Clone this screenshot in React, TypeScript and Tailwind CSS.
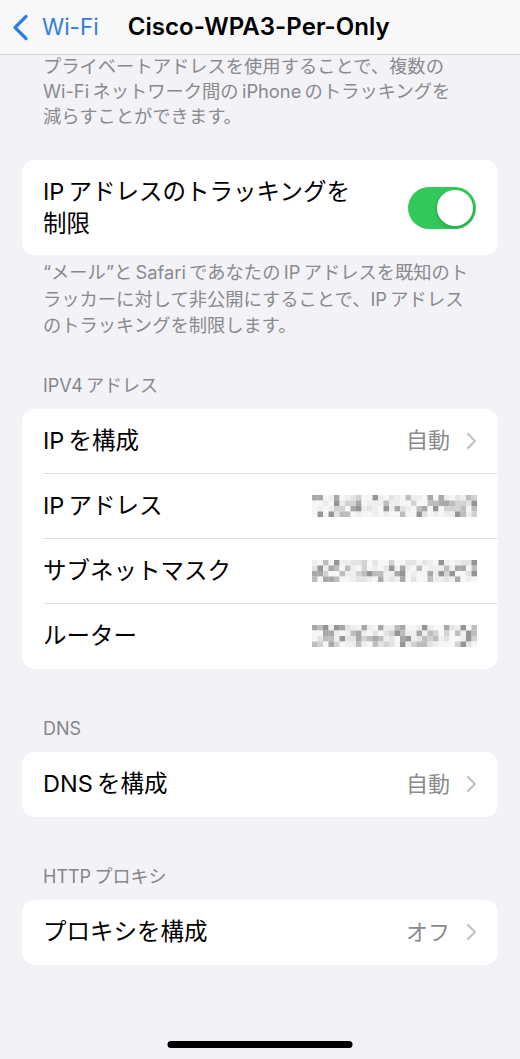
import React from 'react'

const font = { fontFamily: 'Inter, "Noto Sans CJK JP", sans-serif' }
const t = '\u2009' // thin gap iOS puts between latin and kana

// pixelated value, as in the screenshot (blurred IP)
function Mosaic({ seed }: { seed: number }) {
  const cols = 30
  const rows = 4
  const cell = 5.5
  const shades = ['#f6f6f6', '#eeeeee', '#e3e3e3', '#d2d2d2', '#bdbdbd', '#a8a8a8', '#959595']
  let s = seed
  const rand = () => {
    s = (s * 9301 + 49297) % 233280
    return s / 233280
  }
  const rects = []
  for (let r = 0; r < rows; r++) {
    for (let c = 0; c < cols; c++) {
      const v = rand()
      const idx = v < 0.28 ? 0 : v < 0.46 ? 1 : v < 0.58 ? 2 : v < 0.7 ? 3 : v < 0.82 ? 4 : v < 0.92 ? 5 : 6
      rects.push(<rect key={r + '-' + c} x={c * cell} y={r * cell} width={cell + 0.2} height={cell + 0.2} fill={shades[idx]} />)
    }
  }
  return (
    <svg width={165} height={22} viewBox="0 0 165 22">
      {rects}
    </svg>
  )
}

function Chevron() {
  return (
    <svg width="11" height="18" viewBox="0 0 11 18" fill="none">
      <path d="M2 2l7 7-7 7" stroke="#c4c4c7" strokeWidth="2.4" strokeLinecap="round" strokeLinejoin="round" />
    </svg>
  )
}

function Row({ label, value, mosaic, divider }: { label: string; value?: string; mosaic?: number; divider?: boolean }) {
  return (
    <div className="pl-[21px]">
      <div className={`flex h-[65px] items-center justify-between pr-[21px] ${divider ? 'border-b border-[#e1e1e4]' : ''}`}>
        <span className="text-[23.5px] text-black">{label}</span>
        {value && (
          <div className="flex items-center gap-[16px]">
            <span className="text-[22px] text-[#8a8a8e]">{value}</span>
            <Chevron />
          </div>
        )}
        {mosaic !== undefined && <Mosaic seed={mosaic} />}
      </div>
    </div>
  )
}

export default function App() {
  return (
    <div className="relative min-h-[1059px] bg-[#f2f2f7]" style={font}>
      {/* Nav bar */}
      <div className="flex h-[55px] items-center border-b border-[#d6d6d8] bg-[#f8f8f8]">
        <svg className="ml-[12px]" width="17" height="27" viewBox="0 0 17 27" fill="none">
          <path d="M14 2.5L3 13.5l11 11" stroke="#2b7fe0" strokeWidth="3.2" strokeLinecap="round" strokeLinejoin="round" />
        </svg>
        <span className="ml-[13px] text-[22.5px] text-[#2b7fe0]">Wi-Fi</span>
        <span className="ml-[29px] text-[24px] font-semibold tracking-[0.05px] text-black">Cisco-WPA3-Per-Only</span>
      </div>

      <div className="px-[22px] pb-[90px]">
        <p className="-mt-[1px] pl-[21px] pr-[4px] text-[18.3px] leading-[25px] text-[#8a8a8e]">
          プライベートアドレスを使用することで、複数の
          <br />
          {`Wi-Fi${t}ネットワーク間の${t}iPhone${t}のトラッキングを`}
          <br />
          減らすことができます。
        </p>

        <div className="mt-[31px] flex h-[95px] items-center justify-between rounded-[13px] bg-white pl-[21px] pr-[22px]">
          <span className="text-[23.5px] leading-[32px] text-black">
            {`IP${t}アドレスのトラッキングを`}
            <br />
            制限
          </span>
          <div className="flex h-[42px] w-[68px] items-center justify-end rounded-full bg-[#34c759] px-[3px]">
            <div className="h-[36px] w-[36px] rounded-full bg-white shadow-[0_2px_4px_rgba(0,0,0,0.2)]" />
          </div>
        </div>

        <p className="mt-[4px] pl-[21px] pr-[2px] text-[18.3px] leading-[26.5px] text-[#8a8a8e]">
          {`“メール”と${t}Safari${t}であなたの${t}IP${t}アドレスを既知のト`}
          <br />
          {`ラッカーに対して非公開にすることで、IP${t}アドレス`}
          <br />
          のトラッキングを制限します。
        </p>

        <div className="mt-[36px] pl-[21px] text-[18px] leading-[22px] text-[#86868b]">{`IPV4${t}アドレス`}</div>
        <div className="mt-[12px] overflow-hidden rounded-[13px] bg-white">
          <Row label={`IP${t}を構成`} value="自動" divider />
          <Row label={`IP${t}アドレス`} mosaic={17} divider />
          <Row label="サブネットマスク" mosaic={53} divider />
          <Row label="ルーター" mosaic={91} />
        </div>

        <div className="mt-[49px] pl-[21px] text-[18px] leading-[22px] text-[#86868b]">DNS</div>
        <div className="mt-[12px] overflow-hidden rounded-[13px] bg-white">
          <Row label={`DNS${t}を構成`} value="自動" />
        </div>

        <div className="mt-[49px] pl-[21px] text-[18px] leading-[22px] text-[#86868b]">{`HTTP${t}プロキシ`}</div>
        <div className="mt-[12px] overflow-hidden rounded-[13px] bg-white">
          <Row label="プロキシを構成" value="オフ" />
        </div>
      </div>

      {/* home indicator */}
      <div className="absolute bottom-[11px] left-1/2 h-[7px] w-[185px] -translate-x-1/2 rounded-full bg-black" />
    </div>
  )
}
